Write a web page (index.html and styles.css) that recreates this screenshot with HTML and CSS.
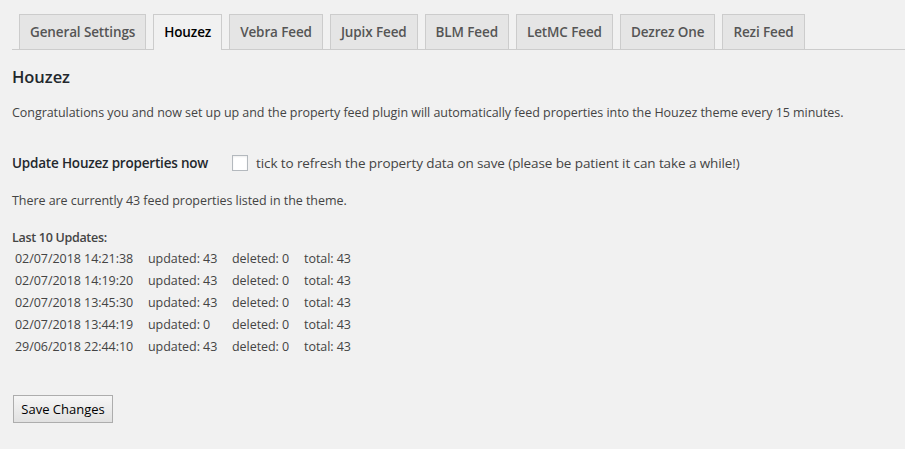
FILE: index.html
```html
<!DOCTYPE html>
<html lang="en">
<head>
<meta charset="utf-8">
<title>Property Feed Settings</title>
<link rel="stylesheet" href="styles.css">
</head>
<body>
<div class="wrap">
  <nav class="nav-tabs">
    <a class="nav-tab">General Settings</a>
    <a class="nav-tab active">Houzez</a>
    <a class="nav-tab">Vebra Feed</a>
    <a class="nav-tab">Jupix Feed</a>
    <a class="nav-tab">BLM Feed</a>
    <a class="nav-tab">LetMC Feed</a>
    <a class="nav-tab">Dezrez One</a>
    <a class="nav-tab">Rezi Feed</a>
  </nav>
  <h2 class="title">Houzez</h2>
  <p class="intro">Congratulations you and now set up up and the property feed plugin will automatically feed properties into the Houzez theme every 15 minutes.</p>
  <div class="field-row">
    <div class="field-label">Update Houzez properties now</div>
    <label class="field-control"><span class="checkbox"></span><span>tick to refresh the property data on save (please be patient it can take a while!)</span></label>
  </div>
  <p class="count">There are currently 43 feed properties listed in the theme.</p>
  <div class="updates">
    <div class="updates-title">Last 10 Updates:</div>
    <div class="updates-grid">
      <span>02/07/2018 14:21:38</span><span>updated: 43</span><span>deleted: 0</span><span>total: 43</span>
      <span>02/07/2018 14:19:20</span><span>updated: 43</span><span>deleted: 0</span><span>total: 43</span>
      <span>02/07/2018 13:45:30</span><span>updated: 43</span><span>deleted: 0</span><span>total: 43</span>
      <span>02/07/2018 13:44:19</span><span>updated: 0</span><span>deleted: 0</span><span>total: 43</span>
      <span>29/06/2018 22:44:10</span><span>updated: 43</span><span>deleted: 0</span><span>total: 43</span>
    </div>
  </div>
  <button class="save-btn" type="button">Save Changes</button>
</div>
</body>
</html>
```
FILE: styles.css
```css
html, body {
  margin: 0;
  padding: 0;
  background: #f1f1f1;
}
body {
  font-family: "Open Sans", "Noto Sans", sans-serif;
  font-size: 12.5px;
  letter-spacing: -0.05px;
  color: #444;
}
.wrap {
  padding-left: 12px;
}
.nav-tabs {
  display: flex;
  align-items: flex-end;
  padding-top: 14px;
  border-bottom: 1px solid #ccc;
}
.nav-tab {
  margin-left: 7px;
  padding: 5px 10px;
  border: 1px solid #ccc;
  border-bottom: none;
  background: #e5e5e5;
  color: #555;
  font-size: 13.5px;
  letter-spacing: -0.12px;
  font-weight: 600;
  line-height: 24px;
  white-space: nowrap;
}
.nav-tab.active {
  background: #f1f1f1;
  color: #000;
  padding-bottom: 6px;
  margin-bottom: -1px;
}
.title {
  margin: 16px 0 0;
  font-size: 16.5px;
  font-weight: 600;
  line-height: 22px;
  color: #23282d;
}
.intro {
  margin: 15px 0 0;
  line-height: 19px;
}
.field-row {
  display: flex;
  align-items: center;
  margin-top: 31px;
  height: 20px;
}
.field-label {
  width: 220px;
  font-size: 13.5px;
  letter-spacing: -0.2px;
  font-weight: 600;
  color: #23282d;
}
.field-control {
  display: flex;
  align-items: center;
  font-size: 13.5px;
  letter-spacing: -0.1px;
}
.checkbox {
  width: 14px;
  height: 14px;
  border: 1px solid #b4b9be;
  background: #fff;
  margin-right: 8px;
  box-shadow: inset 0 1px 2px rgba(0,0,0,0.07);
}
.count {
  margin: 18px 0 0;
  line-height: 19px;
}
.updates {
  margin-top: 18px;
}
.updates-title {
  font-weight: 600;
  letter-spacing: -0.3px;
  line-height: 19px;
  color: #444;
}
.updates-grid {
  display: grid;
  grid-template-columns: 133px 84px 72px auto;
  grid-auto-rows: 22px;
  align-items: center;
  padding-left: 3px;
}
.save-btn {
  display: block;
  margin-top: 38px;
  margin-left: 1px;
  width: 100px;
  height: 28px;
  padding: 0;
  border: 1px solid #adadad;
  background: linear-gradient(#f6f6f6, #e1e1e1);
  color: #000;
  font-family: "Open Sans", "Noto Sans", sans-serif;
  font-size: 13px;
  letter-spacing: 0;
}
```
